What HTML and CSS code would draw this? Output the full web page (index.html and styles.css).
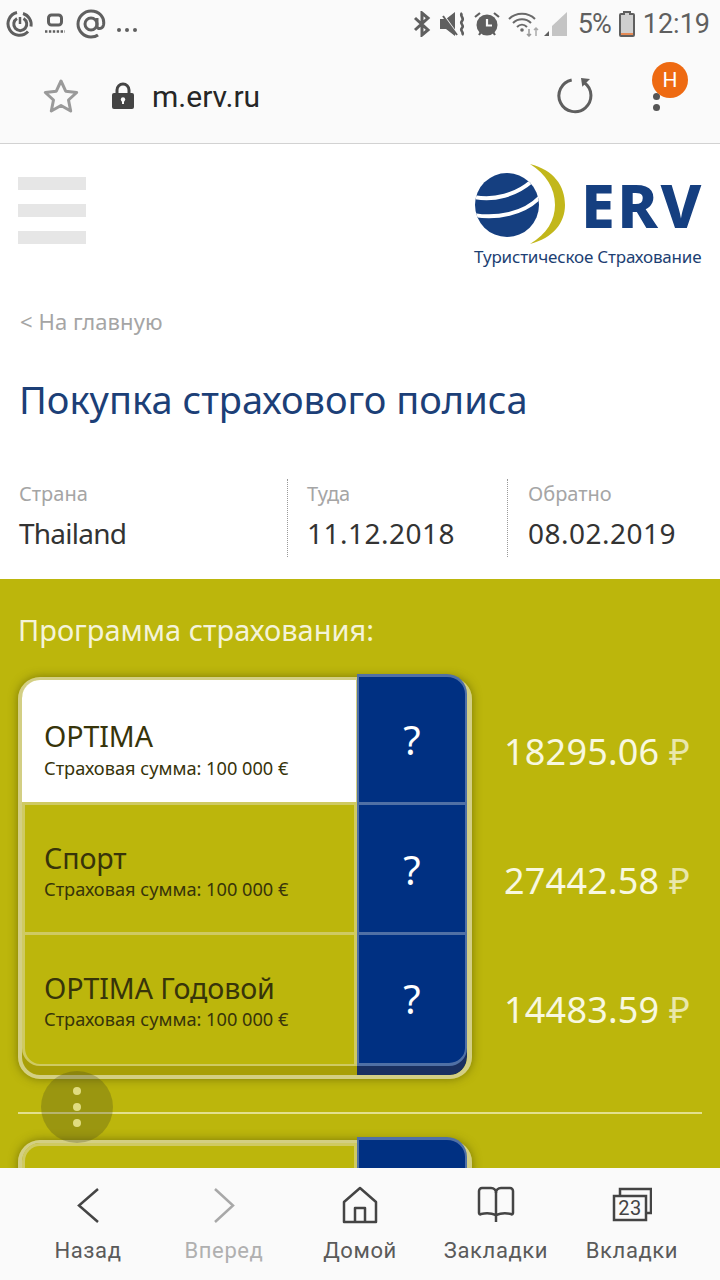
FILE: index.html
```html
<!DOCTYPE html>
<html lang="ru">
<head>
    <meta charset="UTF-8">
    <meta name="viewport" content="width=device-width, initial-scale=1.0">
    <title>Покупка страхового полиса</title>
    <link rel="stylesheet" href="styles.css">
</head>
<body>

    <div class="phone">

        <!-- Status bar -->
        <div class="status-bar">
            <div class="status-left">
                <svg width="28" height="28" viewBox="0 0 28 28" fill="none" stroke="#5f5f5f" stroke-width="3"><path d="M11 2.500a11.500 11.500 0 1 0 11 19"/><path d="M17 3.500a11.500 11.500 0 0 1 8 13"/><path d="M11 8.500a6.500 6.500 0 1 0 6.500 0"/><path d="M14 7v7" stroke-width="2.500"/></svg>
                <svg width="24" height="28" viewBox="0 0 24 28" fill="none" stroke="#5f5f5f"><rect x="6.500" y="5" width="13" height="10" rx="3" stroke-width="3"/><path d="M3 21.500h20" stroke-width="2.600" stroke-dasharray="2.400 1.500"/></svg>
                <svg class="at-icon" width="30" height="30" viewBox="0 0 30 30" fill="none" stroke="#5f5f5f" stroke-width="3"><circle cx="15" cy="15" r="6"/><path d="M21 9v8c0 3.500 5.500 3.500 6.500-1C29 8 23 2 15 2 8 2 2 8 2 15s6 13 13 13c3 0 5-.5 7-2"/></svg>
                <svg class="dots-icon" width="22" height="28" viewBox="0 0 22 28" fill="#5f5f5f"><circle cx="3" cy="20" r="2"/><circle cx="11" cy="20" r="2"/><circle cx="19" cy="20" r="2"/></svg>
            </div>
            <div class="status-right">
                <svg width="20" height="26" viewBox="0 0 20 26" fill="none" stroke="#5f5f5f" stroke-width="3"><path d="M3 7l13 12-6 5V2l6 5L3 19"/></svg>
                <svg width="26" height="26" viewBox="0 0 26 26"><path d="M0 8h6l9-7v24l-9-7H0z" fill="#5f5f5f"/><path d="M2 2l15 21" stroke="#fafafa" stroke-width="2"/><path d="M3 5l14 19" stroke="#5f5f5f" stroke-width="2"/><path d="M22 2c-3 3 3 5 0 8s3 4 0 7 3 4 0 7" fill="none" stroke="#5f5f5f" stroke-width="2.600"/></svg>
                <svg width="26" height="26" viewBox="0 0 26 26"><circle cx="13" cy="14" r="10.500" fill="#5f5f5f"/><path d="M13 8v6.500h5" fill="none" stroke="#fafafa" stroke-width="2.200"/><path d="M1 6l5-4M25 6l-5-4M5 24l2-3M21 24l-2-3" stroke="#5f5f5f" stroke-width="2.200"/></svg>
                <svg width="34" height="26" viewBox="0 0 34 26" fill="none" stroke="#6a6a6a" stroke-width="2"><path d="M1 8c7-7 19-7 26 0"/><path d="M5 12c5-5 13-5 18 0"/><path d="M9 16c3-3 7-3 10 0"/><circle cx="14" cy="19" r="1.800" fill="#6a6a6a" stroke="none"/><path d="M21 18v7M19 23l2 2 2-2" stroke="#999" stroke-width="1.500"/><path d="M28 25v-8M26 19l2-2 2 2" stroke="#aaa" stroke-width="1.500"/></svg>
                <svg class="signal-icon" width="24" height="26" viewBox="0 0 24 26"><path d="M8 25V15L23 1v24z" fill="#c4c4c4"/><path d="M0 25l5-5v5z" fill="#5f5f5f"/></svg>
                <span class="status-text status-percent">5%</span>
                <svg class="battery" width="16" height="26" viewBox="0 0 16 26"><path d="M5 1h6v2h3a1 1 0 0 1 1 1v20a1 1 0 0 1-1 1H2a1 1 0 0 1-1-1V4a1 1 0 0 1 1-1h3z" fill="#cfcfcf" stroke="#5f5f5f" stroke-width="2"/><path d="M2 22h12v2H2z" fill="#e58a55"/></svg>
                <span class="status-text status-time">12:19</span>
            </div>
        </div>

        <!-- Address bar -->
        <div class="address-bar">
            <svg class="star-icon" width="36" height="36" viewBox="0 0 36 36" fill="none" stroke="#9a9a9a" stroke-width="3" stroke-linejoin="round"><path d="M18 3l4.700 10.200 11 1.300-8.200 7.500 2.200 11L18 27.500 8.300 33l2.200-11-8.200-7.500 11-1.300z"/></svg>
            <svg class="lock-icon" width="24" height="28" viewBox="0 0 24 28"><path d="M6 13V8a6 6 0 0 1 12 0v5" fill="none" stroke="#444" stroke-width="3"/><rect x="1" y="11" width="22" height="16" rx="2" fill="#444"/><circle cx="12" cy="17.500" r="2.200" fill="#fafafa"/><path d="M11 18h2v4h-2z" fill="#fafafa"/></svg>
            <span class="url">m.erv.ru</span>
            <svg class="reload-icon" width="38" height="38" viewBox="0 0 38 38"><path d="M14.700 3A16 16 0 1 0 27 5.500" fill="none" stroke="#5f5f5f" stroke-width="3"/><path d="M24 1l9 1-7.700 7.700z" fill="#5f5f5f"/></svg>
            <div class="menu-wrap">
                <span class="menu-dot"></span>
                <span class="menu-dot"></span>
                <span class="notify-badge">H</span>
            </div>
        </div>

        <!-- Page -->
        <div class="page">
            <div class="site-header">
                <div class="burger">
                    <span></span>
                    <span></span>
                    <span></span>
                </div>
                <div class="logo">
                    <div class="logo-top">
                        <svg class="logo-mark" width="92" height="80" viewBox="0 0 92 80">
                            <defs><clipPath id="globe"><circle cx="33" cy="41" r="32"/></clipPath></defs>
                            <circle cx="33" cy="41" r="32" fill="#153f80"/>
                            <g clip-path="url(#globe)" fill="none" stroke="#fff" stroke-width="4">
                                <path d="M0 33c20 4 42-2 58-16"/>
                                <path d="M0 51c22 4 50-1 66-18"/>
                            </g>
                            <path d="M56 0c24 6 35 22 35 41 0 18-12 33-35 39 17-10 25-24 25-39C81 24 72 10 56 0z" fill="#c2b71b"/>
                        </svg>
                        <span class="logo-name">ERV</span>
                    </div>
                    <div class="logo-tagline">Туристическое Страхование</div>
                </div>
            </div>

            <a class="back-link" href="#">&lt; На главную</a>

            <h1 class="page-title">Покупка страхового полиса</h1>

            <div class="trip-info">
                <div class="trip-col trip-country">
                    <div class="trip-label">Страна</div>
                    <div class="trip-value">Thailand</div>
                </div>
                <div class="trip-col trip-there">
                    <div class="trip-label">Туда</div>
                    <div class="trip-value">11.12.2018</div>
                </div>
                <div class="trip-col trip-back">
                    <div class="trip-label">Обратно</div>
                    <div class="trip-value">08.02.2019</div>
                </div>
            </div>

            <div class="programs">
                <h2 class="programs-title">Программа страхования:</h2>

                <div class="program-group">
                    <div class="program-card">
                        <div class="program-row row-first selected">
                            <div class="program-info">
                                <div class="program-name">OPTIMA</div>
                                <div class="program-sum">Страховая сумма: 100 000 €</div>
                            </div>
                            <div class="program-help">?</div>
                        </div>
                        <div class="program-row row-second">
                            <div class="program-info">
                                <div class="program-name">Спорт</div>
                                <div class="program-sum">Страховая сумма: 100 000 €</div>
                            </div>
                            <div class="program-help">?</div>
                        </div>
                        <div class="program-row row-third">
                            <div class="program-info">
                                <div class="program-name">OPTIMA Годовой</div>
                                <div class="program-sum">Страховая сумма: 100 000 €</div>
                            </div>
                            <div class="program-help">?</div>
                        </div>
                    </div>
                    <div class="program-prices">
                        <div class="price price-first">18295.06 <span class="rub">₽</span></div>
                        <div class="price">27442.58 <span class="rub">₽</span></div>
                        <div class="price">14483.59 <span class="rub">₽</span></div>
                    </div>
                </div>

                <div class="divider"></div>

                <div class="program-card card-next">
                    <div class="program-row row-first">
                        <div class="program-info"></div>
                        <div class="program-help"></div>
                    </div>
                </div>
            </div>

            <div class="fab">
                <span></span>
                <span></span>
                <span></span>
            </div>
        </div>

        <!-- Bottom navigation -->
        <div class="bottom-nav">
            <div class="nav-item">
                <svg width="40" height="40" viewBox="0 0 40 40" fill="none" stroke="#444" stroke-width="2.500"><path d="M30 4L11 20.500 30 37"/></svg>
                <span>Назад</span>
            </div>
            <div class="nav-item nav-disabled">
                <svg width="40" height="40" viewBox="0 0 40 40" fill="none" stroke="#a8a8a8" stroke-width="2.500"><path d="M11 4l18 16.500L11 37"/></svg>
                <span>Вперед</span>
            </div>
            <div class="nav-item">
                <svg width="40" height="40" viewBox="0 0 40 40" fill="none" stroke="#444" stroke-width="2.500" stroke-linejoin="round"><path d="M20 3L4 17v20h32V17z"/><path d="M15 37V23h10v14"/></svg>
                <span>Домой</span>
            </div>
            <div class="nav-item">
                <svg width="40" height="40" viewBox="0 0 40 40" fill="none" stroke="#444" stroke-width="2.500" stroke-linejoin="round"><path d="M20 8c0-3-2-5-5-5H6a3 3 0 0 0-3 3v22c0 1 1 2 2 1 5-1 10-1 15 1"/><path d="M20 8c0-3 2-5 5-5h9a3 3 0 0 1 3 3v22c0 1-1 2-2 1-5-1-10-1-15 1"/><path d="M20 8v29"/></svg>
                <span>Закладки</span>
            </div>
            <div class="nav-item">
                <svg width="40" height="40" viewBox="0 0 40 40" fill="none" stroke="#444" stroke-width="2.500"><path d="M8 10V4h31v24h-5"/><rect x="2" y="11" width="32" height="24"/><text x="18" y="30" text-anchor="middle" class="tabs-count">23</text></svg>
                <span>Вкладки</span>
            </div>
        </div>

    </div>

</body>
</html>
```

FILE: styles.css
```css
* {
    box-sizing: border-box;
}

body {
    margin: 0;
    font-family: "Noto Sans", sans-serif;
    background-color: #fafafa;
}

.phone {
    width: 720px;
    height: 1280px;
    display: flex;
    flex-direction: column;
    overflow: hidden;
}

/* Status bar */
.status-bar {
    height: 48px;
    padding: 0 10px 0 6px;
    display: flex;
    justify-content: space-between;
    align-items: center;
    background-color: #fafafa;
    flex-shrink: 0;
}

.status-left, .status-right {
    display: flex;
    align-items: center;
    gap: 8px;
}

.at-icon {
    margin-left: 2px;
}

.dots-icon {
    margin-left: 2px;
}

.signal-icon {
    margin-left: -6px;
}

.status-text {
    font-family: "Roboto", sans-serif;
    font-size: 27px;
    color: #5f5f5f;
}

.status-percent {
    letter-spacing: -1px;
    margin-left: 2px;
}

/* Address bar */
.address-bar {
    height: 96px;
    position: relative;
    display: flex;
    align-items: center;
    padding: 0 0 0 43px;
    background-color: #fafafa;
    border-bottom: 1px solid #d2d2d2;
    flex-shrink: 0;
}

.lock-icon {
    margin-left: 32px;
}

.url {
    font-family: "Roboto", sans-serif;
    font-size: 30px;
    color: #262626;
    margin: 1px 0 0 17px;
}

.reload-icon {
    margin-left: auto;
    margin-right: 58px;
}

.menu-wrap {
    width: 7px;
    display: flex;
    flex-direction: column;
    gap: 4px;
    margin-right: 60px;
    position: relative;
    margin-top: 12px;
}

.menu-dot {
    width: 7px;
    height: 7px;
    border-radius: 50%;
    background-color: #555;
}

.notify-badge {
    position: absolute;
    left: -1px;
    top: -31px;
    width: 36px;
    height: 36px;
    border-radius: 50%;
    background-color: #ee6a12;
    color: #fff;
    font-family: "Roboto", sans-serif;
    font-size: 21px;
    line-height: 36px;
    text-align: center;
}

/* Page */
.page {
    flex: 1;
    min-height: 0;
    position: relative;
    overflow: hidden;
    background-color: #fff;
    padding-top: 20px;
}

.site-header {
    display: flex;
    justify-content: space-between;
    padding: 0 18px;
}

.burger {
    width: 68px;
    padding-top: 13px;
    display: flex;
    flex-direction: column;
    gap: 14px;
}

.burger span {
    height: 13px;
    background-color: #e6e6e6;
}

.logo {
    width: 228px;
}

.logo-top {
    display: flex;
    align-items: center;
    height: 80px;
}

.logo-mark {
    flex-shrink: 0;
}

.logo-name {
    font-size: 61px;
    font-weight: 800;
    color: #153f80;
    margin-left: 15px;
    letter-spacing: 2.5px;
}

.logo-tagline {
    font-size: 17px;
    line-height: 22px;
    letter-spacing: -0.18px;
    color: #1d3f73;
    white-space: nowrap;
    margin-top: 2px;
}

.back-link {
    display: block;
    margin: 38px 0 0 20px;
    font-size: 22px;
    letter-spacing: 0.1px;
    color: #a5a5a5;
    text-decoration: none;
}

.page-title {
    margin: 37px 0 0 19px;
    font-size: 38px;
    font-weight: 400;
    color: #1c3f77;
}

.trip-info {
    display: flex;
    margin-top: 54px;
    height: 78px;
    padding-left: 19px;
}

.trip-col {
    padding-top: 1px;
}

.trip-country {
    width: 268px;
}

.trip-country .trip-value {
    letter-spacing: -0.75px;
}

.trip-there {
    width: 220px;
    padding-left: 19px;
    border-left: 1px dotted #999;
}

.trip-back {
    padding-left: 20px;
    border-left: 1px dotted #999;
}

.trip-there .trip-value, .trip-back .trip-value {
    letter-spacing: 0.5px;
}

.trip-label {
    font-size: 20px;
    color: #a5a5a5;
}

.trip-value {
    font-size: 28px;
    color: #333;
    margin-top: 7px;
}

/* Programs */
.programs {
    margin-top: 22px;
    padding: 32px 18px 0;
    height: 600px;
    background-color: #bcb60c;
}

.programs-title {
    margin: 0;
    font-size: 29px;
    line-height: 38px;
    font-weight: 400;
    color: #f4f3d8;
}

.program-group {
    display: flex;
    margin-top: 25px;
}

.program-card {
    width: 454px;
    height: 402px;
    margin-top: 3px;
    border-style: solid;
    border-color: #d3cf84;
    border-width: 3px 5px 4px 4px;
    border-radius: 22px;
    box-shadow: 0 0 10px rgba(60, 60, 0, 0.5);
    display: flex;
    flex-direction: column;
    background: linear-gradient(to right, #a89f08 335px, #1a3060 335px);
    background-clip: padding-box;
}

.program-row {
    display: flex;
}

.program-info {
    width: 335px;
    background-color: #bcb60c;
    color: #37340a;
}

.program-name {
    font-size: 28.6px;
    line-height: 36px;
    letter-spacing: -0.1px;
}

.program-sum {
    font-size: 18.2px;
    line-height: 26px;
}

.program-help {
    flex: 1;
    background-color: #003082;
    color: #fff;
    font-size: 40px;
    line-height: 54px;
    text-align: center;
    border-left: 2px solid #5070a5;
    border-right: 2px solid #5070a5;
}

.row-first {
    height: 122px;
}

.row-first .program-info {
    border-radius: 18px 0 0 0;
    border-left: 3px solid #cfca62;
    border-top: 3px solid #cfca62;
    border-right: 3px solid #cfca62;
    padding: 35px 0 0 19px;
}

.row-first .program-help {
    height: 128px;
    margin-top: -6px;
    padding-top: 36px;
    border-top: 3px solid #5070a5;
    border-radius: 0 20px 0 0;
}

.selected .program-info {
    background-color: #fff;
    border: 0;
    border-right: 1px solid #d3cf84;
    padding: 38px 0 0 22px;
}

.selected .program-sum {
    margin-top: 1px;
}

.row-second {
    height: 130px;
}

.row-third {
    height: 134px;
}

.row-second .program-info, .row-third .program-info {
    border-top: 3px solid #cfca62;
    border-left: 3px solid #cfca62;
    border-right: 3px solid #cfca62;
    padding: 35px 0 0 19px;
}

.row-second .program-help, .row-third .program-help {
    border-top: 3px solid #5070a5;
}

.row-second .program-help {
    padding-top: 38px;
}

.row-third .program-help {
    padding-top: 37px;
    border-bottom: 3px solid #5070a5;
    border-radius: 0 0 18px 0;
}

.row-third .program-info {
    border-bottom: 2px solid #cfca62;
    border-radius: 0 0 0 18px;
}

.program-prices {
    flex: 1;
    display: flex;
    flex-direction: column;
    padding-left: 32px;
}

.price {
    font-size: 36px;
    line-height: 48px;
    letter-spacing: 0.2px;
    color: #f8f8e0;
    white-space: nowrap;
    margin-top: 81px;
}

.price-first {
    margin-top: 54px;
}

.rub {
    opacity: 0.75;
}

.divider {
    height: 2px;
    margin-top: 33px;
    background-color: #e3e08e;
}

.card-next {
    margin-top: 26px;
}

.fab {
    position: absolute;
    left: 41px;
    top: 927px;
    width: 72px;
    height: 72px;
    border-radius: 50%;
    background-color: rgba(70, 70, 30, 0.28);
    display: flex;
    flex-direction: column;
    align-items: center;
    justify-content: center;
    gap: 8px;
}

.fab span {
    width: 8px;
    height: 8px;
    border-radius: 50%;
    background-color: #e0dc80;
}

/* Bottom navigation */
.bottom-nav {
    height: 112px;
    flex-shrink: 0;
    display: flex;
    background-color: #fafafa;
    padding: 17px 0 0 20px;
    font-family: "Roboto", sans-serif;
}

.nav-item {
    width: 136px;
    display: flex;
    flex-direction: column;
    align-items: center;
    gap: 13px;
    font-size: 22px;
    color: #5a5a5a;
    letter-spacing: 0.6px;
}

.nav-disabled {
    color: #b0b0b0;
}

.tabs-count {
    font-family: "Roboto", sans-serif;
    font-size: 20px;
    fill: #444;
    stroke: none;
}
```
